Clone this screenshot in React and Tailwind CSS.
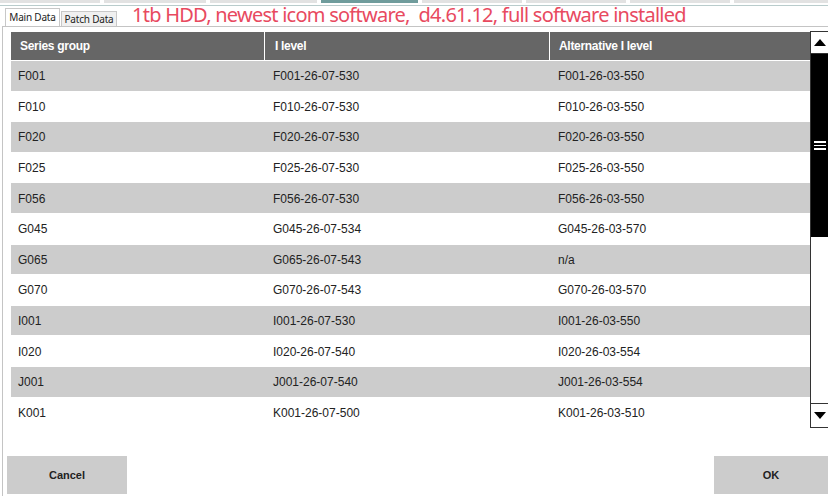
import React from "react";

const rows = [
  ["F001", "F001-26-07-530", "F001-26-03-550"],
  ["F010", "F010-26-07-530", "F010-26-03-550"],
  ["F020", "F020-26-07-530", "F020-26-03-550"],
  ["F025", "F025-26-07-530", "F025-26-03-550"],
  ["F056", "F056-26-07-530", "F056-26-03-550"],
  ["G045", "G045-26-07-534", "G045-26-03-570"],
  ["G065", "G065-26-07-543", "n/a"],
  ["G070", "G070-26-07-543", "G070-26-03-570"],
  ["I001", "I001-26-07-530", "I001-26-03-550"],
  ["I020", "I020-26-07-540", "I020-26-03-554"],
  ["J001", "J001-26-07-540", "J001-26-03-554"],
  ["K001", "K001-26-07-500", "K001-26-03-510"],
];

export default function App() {
  return (
    <div className="w-[828px] h-[500px] bg-white overflow-hidden relative font-['Liberation_Sans',Arial,sans-serif]">
      {/* top strip */}
      <div className="flex h-[3px] gap-[4px]">
        <div className="w-[100px] bg-[#e2e2e2]" />
        <div className="w-[102px] bg-[#e2e2e2]" />
        <div className="w-[107px] bg-[#e2e2e2]" />
        <div className="w-[97px] bg-[#6f9c9c]" />
        <div className="w-[100px] bg-[#e2e2e2]" />
        <div className="w-[100px] bg-[#e2e2e2]" />
        <div className="w-[100px] bg-[#e2e2e2]" />
        <div className="flex-1 bg-[#e2e2e2]" />
      </div>
      <div className="h-[2px]" />
      <div className="h-[1px] bg-[#b9cccc]" />
      {/* tab row */}
      <div className="flex items-end h-[20px] pl-[5px]">
        <div className="h-[18px] w-[55px] border border-b-0 border-[#c8c8c8] bg-white flex items-center justify-center text-[10px] tracking-[-0.2px] text-[#222] font-['Noto_Sans',sans-serif]">
          Main Data
        </div>
        <div className="h-[15px] w-[56px] ml-[1px] border border-b-0 border-[#c8c8c8] bg-[#f0f0f0] flex items-center justify-center text-[10px] tracking-[-0.2px] text-[#222] font-['Noto_Sans',sans-serif]">
          Patch Data
        </div>
        <div className="ml-[15px] self-stretch flex items-center text-[20px] leading-none text-[#e84a5f] tracking-[-0.75px] font-['Noto_Sans',sans-serif] whitespace-pre -mt-[2px]">
          1tb HDD, newest icom software,  d4.61.12, full software installed
        </div>
      </div>
      {/* panel */}
      <div className="ml-[2px] border-l border-t border-[#c4c4c4] h-[470px] pt-[4px] pl-[8px]">
        <div className="flex">
          <div className="w-[799px]">
            {/* header */}
            <div className="flex h-[28px] mt-[1px] bg-[#666666] text-white text-[12px] font-bold tracking-[-0.3px]">
              <div className="w-[254px] pl-[9px] flex items-center border-r border-white">Series group</div>
              <div className="w-[285px] pl-[10px] flex items-center border-r border-white">I level</div>
              <div className="flex-1 pl-[9px] flex items-center">Alternative I level</div>
            </div>
            <div className="h-[1px]" />
            {rows.map((r, i) => (
              <div
                key={r[0]}
                className={`flex h-[30.6px] border-b border-white text-[12px] text-[#222] ${i % 2 === 0 ? "bg-[#cccccc]" : "bg-white"}`}
              >
                <div className="w-[255px] pl-[7px] flex items-center pt-[1px]">{r[0]}</div>
                <div className="w-[285px] pl-[7px] flex items-center pt-[1px]">{r[1]}</div>
                <div className="flex-1 pl-[7px] flex items-center pt-[1px]">{r[2]}</div>
              </div>
            ))}
          </div>
          {/* scrollbar */}
          <div className="w-[18px] h-[397px] border-l border-[#333] flex flex-col bg-white">
            <div className="h-[23px] border-t border-b border-[#333] flex items-center justify-center">
              <svg width="12" height="7" viewBox="0 0 12 7"><polygon points="6,0 12,7 0,7" fill="#000" /></svg>
            </div>
            <div className="h-[183px] bg-black flex flex-col items-center justify-center gap-[2px]">
              <div className="w-[12px] h-[1.5px] bg-white" />
              <div className="w-[12px] h-[1.5px] bg-white" />
              <div className="w-[12px] h-[1.5px] bg-white" />
            </div>
            <div className="flex-1" />
            <div className="h-[25px] border-t border-b border-[#333] flex items-center justify-center">
              <svg width="12" height="7" viewBox="0 0 12 7"><polygon points="0,0 12,0 6,7" fill="#000" /></svg>
            </div>
          </div>
        </div>
        {/* buttons */}
        <div className="flex justify-between mt-[28px] -ml-[4px]">
          <div className="w-[120px] h-[38px] bg-[#cccccc] flex items-center justify-center text-[11px] font-bold text-[#222] pt-[1px]">Cancel</div>
          <div className="w-[114px] h-[38px] bg-[#cccccc] flex items-center justify-center text-[11px] font-bold text-[#222] pt-[1px]">OK</div>
        </div>
      </div>
    </div>
  );
}
